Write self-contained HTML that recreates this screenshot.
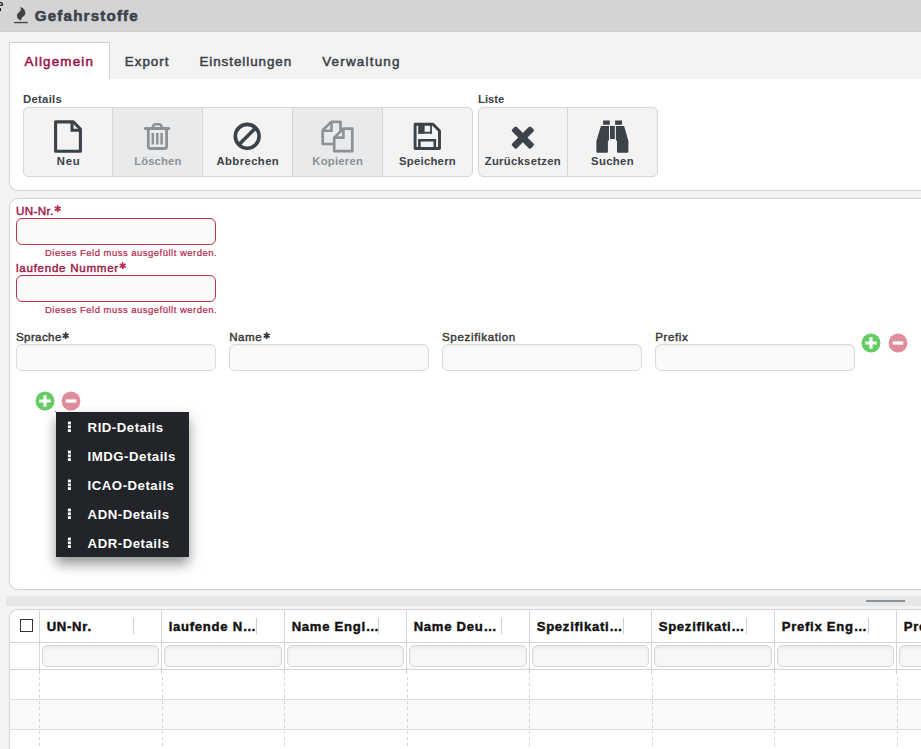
<!DOCTYPE html>
<html><head><meta charset="utf-8"><style>
html,body{margin:0;padding:0}
body{width:921px;height:749px;overflow:hidden;position:relative;background:#f3f3f3;font-family:"Liberation Sans", sans-serif}
.t{position:absolute;white-space:pre;line-height:1;font-family:"Liberation Sans", sans-serif}
svg{overflow:visible}
</style></head><body>
<div style="position:absolute;left:0px;top:0px;width:921px;height:32px;box-sizing:border-box;background:#d4d4d4;border-bottom:1px solid #cecece"></div>
<svg style="position:absolute;left:0;top:0" width="6" height="14" viewBox="0 0 6 14"><path d="M-3 2.6 H0.9 Q1.7 2.6 2.1 3.4 L2.5 4.2 V5.1 H-3 Z" fill="#fff" stroke="#14141c" stroke-width="1.15"/><rect x="-1" y="8.2" width="2" height="2.9" fill="#14141c"/></svg>
<svg style="position:absolute;left:13px;top:5px" width="16" height="20" viewBox="0 0 16 20"><path d="M7.4 2 C9.5 2.6 12.4 4.6 12.4 8.1 C12.4 10.6 9.6 11.7 8.7 13 C8.2 13.8 8.3 14.8 8.4 15.5 C6 15.2 3.9 13.2 3.9 10.8 C3.9 8.6 5.8 7.5 7.3 6 C8 5.2 7.8 3.4 7.4 2 Z" fill="#3b4249"/><rect x="1.2" y="16.9" width="13.5" height="1.3" fill="#3b4249"/></svg>
<div class="t" style="left:34.80px;top:7.73px;font-size:15.2px;font-weight:700;color:#3b4249;letter-spacing:1.15px;-webkit-text-stroke:0.55px #3b4249">Gefahrstoffe</div>
<div style="position:absolute;left:109px;top:79px;width:812px;height:1px;box-sizing:border-box;background:#d2d2d2"></div>
<div style="position:absolute;left:9px;top:42px;width:101px;height:39px;box-sizing:border-box;background:#fff;border:1px solid #d2d2d2;border-bottom:none"></div>
<div style="position:absolute;left:9px;top:79px;width:1px;height:1px;box-sizing:border-box;background:#fff"></div>
<div class="t" style="left:24.60px;top:54.86px;font-size:13.4px;font-weight:400;color:#9a1048;letter-spacing:1.2px;-webkit-text-stroke:0.5px #9a1048">Allgemein</div>
<div class="t" style="left:124.80px;top:54.86px;font-size:13.4px;font-weight:400;color:#3b4249;letter-spacing:1.0px;-webkit-text-stroke:0.5px #3b4249">Export</div>
<div class="t" style="left:199.40px;top:54.86px;font-size:13.4px;font-weight:400;color:#3b4249;letter-spacing:0.95px;-webkit-text-stroke:0.5px #3b4249">Einstellungen</div>
<div class="t" style="left:322.20px;top:54.86px;font-size:13.4px;font-weight:400;color:#3b4249;letter-spacing:1.22px;-webkit-text-stroke:0.5px #3b4249">Verwaltung</div>
<div style="position:absolute;left:9px;top:79px;width:930px;height:112px;box-sizing:border-box;background:#fff;border:1px solid #d2d2d2;border-top:none;border-radius:0 0 0 9px"></div>
<div class="t" style="left:23.00px;top:94.03px;font-size:11.3px;font-weight:700;color:#3b4249;letter-spacing:0.3px;">Details</div>
<div class="t" style="left:478.00px;top:94.03px;font-size:11.3px;font-weight:700;color:#3b4249;letter-spacing:0px;">Liste</div>
<div style="position:absolute;left:23px;top:107px;width:450px;height:70px;box-sizing:border-box;background:#f3f3f3;border:1px solid #d6d6d6;border-radius:5px"></div>
<div style="position:absolute;left:113px;top:108px;width:89px;height:68px;box-sizing:border-box;background:#e9eaec"></div>
<div style="position:absolute;left:293px;top:108px;width:89px;height:68px;box-sizing:border-box;background:#e9eaec"></div>
<div style="position:absolute;left:112px;top:108px;width:1px;height:68px;box-sizing:border-box;background:#d6d6d6"></div>
<div style="position:absolute;left:202px;top:108px;width:1px;height:68px;box-sizing:border-box;background:#d6d6d6"></div>
<div style="position:absolute;left:292px;top:108px;width:1px;height:68px;box-sizing:border-box;background:#d6d6d6"></div>
<div style="position:absolute;left:382px;top:108px;width:1px;height:68px;box-sizing:border-box;background:#d6d6d6"></div>
<div style="position:absolute;left:478px;top:107px;width:180px;height:70px;box-sizing:border-box;background:#f3f3f3;border:1px solid #d6d6d6;border-radius:5px"></div>
<div style="position:absolute;left:567px;top:108px;width:1px;height:68px;box-sizing:border-box;background:#d6d6d6"></div>
<div class="t" style="left:56.70px;top:156.43px;font-size:11.3px;font-weight:700;color:#3b4249;letter-spacing:0.85px;">Neu</div>
<div class="t" style="left:134.20px;top:156.43px;font-size:11.3px;font-weight:700;color:#8b9298;letter-spacing:0.117px;">Löschen</div>
<div class="t" style="left:216.50px;top:156.43px;font-size:11.3px;font-weight:700;color:#3b4249;letter-spacing:0.405px;">Abbrechen</div>
<div class="t" style="left:312.30px;top:156.43px;font-size:11.3px;font-weight:700;color:#8b9298;letter-spacing:0.223px;">Kopieren</div>
<div class="t" style="left:399.10px;top:156.43px;font-size:11.3px;font-weight:700;color:#3b4249;letter-spacing:0.245px;">Speichern</div>
<div class="t" style="left:484.70px;top:156.43px;font-size:11.3px;font-weight:700;color:#3b4249;letter-spacing:0.291px;">Zurücksetzen</div>
<div class="t" style="left:591.10px;top:156.43px;font-size:11.3px;font-weight:700;color:#3b4249;letter-spacing:0.35px;">Suchen</div>
<svg style="position:absolute;left:54px;top:120px" width="28" height="33" viewBox="0 0 28 33"><path d="M1.6 1.9 H19.3 L26.4 9 V31.2 H1.6 Z" fill="none" stroke="#3b4249" stroke-width="3.1" stroke-linejoin="round"/><path d="M18 1.9 V10.2 H26.4" fill="none" stroke="#3b4249" stroke-width="3"/></svg>
<svg style="position:absolute;left:143px;top:121px" width="28" height="30" viewBox="0 0 28 30"><path d="M2.4 7.5 H25.6" stroke="#8b9298" stroke-width="3" stroke-linecap="round"/><path d="M9.5 7 L10.6 4.3 Q11 3.3 12 3.3 H16.6 Q17.6 3.3 18 4.3 L19.4 7" fill="none" stroke="#8b9298" stroke-width="2.6"/><path d="M5.3 8 V25.5 Q5.3 27.5 7.3 27.5 H21.6 Q23.6 27.5 23.6 25.5 V8" fill="none" stroke="#8b9298" stroke-width="2.8"/><path d="M9.8 12 V23.6 M14.3 12 V23.6 M18.6 12 V23.6" stroke="#8b9298" stroke-width="2.5"/></svg>
<svg style="position:absolute;left:232px;top:121px" width="30" height="30" viewBox="0 0 30 30"><circle cx="15.2" cy="15.3" r="11.9" fill="none" stroke="#3b4249" stroke-width="3.6"/><path d="M6.8 23.7 L23.6 6.9" stroke="#3b4249" stroke-width="3.6"/></svg>
<svg style="position:absolute;left:320px;top:119px" width="36" height="36" viewBox="0 0 36 36"><path d="M14.2 25 H2.7 V11.2 L11.2 2.9 H20.5 V11.8" fill="none" stroke="#8b9298" stroke-width="2.7" stroke-linejoin="round"/><path d="M11.5 3 V11.7 H2.7" fill="none" stroke="#8b9298" stroke-width="2.6"/><path d="M14.2 32.1 V18.6 L23.2 9.7 H32.3 V32.1 Z" fill="none" stroke="#8b9298" stroke-width="2.7" stroke-linejoin="round"/><path d="M23.4 9.8 V18.6 H14.2" fill="none" stroke="#8b9298" stroke-width="2.6"/></svg>
<svg style="position:absolute;left:412px;top:121px" width="31" height="31" viewBox="0 0 31 31"><path d="M3.1 3.3 H21 L27.5 9.8 V27.5 H3.1 Z" fill="none" stroke="#3b4249" stroke-width="2.9" stroke-linejoin="round"/><rect x="6.2" y="3" width="6.4" height="9.6" fill="#3b4249"/><rect x="18.1" y="3" width="1.8" height="9.6" fill="#3b4249"/><rect x="6.2" y="10.8" width="13.7" height="1.8" fill="#3b4249"/><path d="M7.4 27.5 V19.3 H22.8 V27.5" fill="none" stroke="#3b4249" stroke-width="2.6"/></svg>
<svg style="position:absolute;left:510px;top:125px" width="26" height="26" viewBox="0 0 26 26"><g transform="rotate(45 12.85 12.55)" fill="#3b4249"><rect x="-0.45" y="9.25" width="26.6" height="6.6" rx="1.6"/><rect x="9.55" y="-0.75" width="6.6" height="26.6" rx="1.6"/></g></svg>
<svg style="position:absolute;left:595px;top:119px" width="35" height="35" viewBox="0 0 35 35"><rect x="8.1" y="1.5" width="6.7" height="4.3" fill="#3b4249"/><rect x="20.1" y="1.5" width="6.9" height="4.3" fill="#3b4249"/><path d="M5.9 6.9 H14 V21.6 H12.9 V32.8 Q12.9 33.8 11.9 33.8 H2.4 Q1.4 33.8 1.4 32.8 V22.1 Z" fill="#3b4249"/><rect x="15" y="6.9" width="4.8" height="13.1" fill="#3b4249"/><path d="M29.1 6.9 H20.9 V21.6 H22 V32.8 Q22 33.8 23 33.8 H32.4 Q33.4 33.8 33.4 32.8 V22.1 Z" fill="#3b4249"/></svg>
<div style="position:absolute;left:9px;top:198px;width:930px;height:392px;box-sizing:border-box;background:#fff;border:1px solid #d2d2d2;border-radius:9px 0 0 9px"></div>
<div class="t" style="left:16.00px;top:204.58px;font-size:11.6px;font-weight:400;color:#9c1b4b;letter-spacing:0.38px;-webkit-text-stroke:0.45px #9c1b4b">UN-Nr.</div>
<svg style="position:absolute;left:53.6px;top:205.1px" width="7" height="8" viewBox="0 0 7 8"><path d="M3.7 0.85 V6.35 M1.3 2.3 L6.1 5.05 M1.3 5.05 L6.1 2.3" stroke="#c22d4f" stroke-width="1.7" stroke-linecap="round"/></svg>
<div style="position:absolute;left:16px;top:218px;width:200px;height:27px;box-sizing:border-box;background:#fafafa;border:1px solid #c43150;border-radius:6px;box-shadow:inset 0 1px 2px rgba(0,0,0,0.035)"></div>
<div class="t" style="left:45.00px;top:248.16px;font-size:9.5px;font-weight:400;color:#b51d47;letter-spacing:0.48px;-webkit-text-stroke:0.2px #b51d47">Dieses Feld muss ausgefüllt werden.</div>
<div class="t" style="left:16.00px;top:261.58px;font-size:11.6px;font-weight:400;color:#9c1b4b;letter-spacing:0.72px;-webkit-text-stroke:0.45px #9c1b4b">laufende Nummer</div>
<svg style="position:absolute;left:118.9px;top:262.09999999999997px" width="7" height="8" viewBox="0 0 7 8"><path d="M3.7 0.85 V6.35 M1.3 2.3 L6.1 5.05 M1.3 5.05 L6.1 2.3" stroke="#c22d4f" stroke-width="1.7" stroke-linecap="round"/></svg>
<div style="position:absolute;left:16px;top:275px;width:200px;height:27px;box-sizing:border-box;background:#fafafa;border:1px solid #c43150;border-radius:6px;box-shadow:inset 0 1px 2px rgba(0,0,0,0.035)"></div>
<div class="t" style="left:45.00px;top:305.16px;font-size:9.5px;font-weight:400;color:#b51d47;letter-spacing:0.48px;-webkit-text-stroke:0.2px #b51d47">Dieses Feld muss ausgefüllt werden.</div>
<div class="t" style="left:16.00px;top:331.28px;font-size:11.6px;font-weight:400;color:#3a3a3a;letter-spacing:0.36px;-webkit-text-stroke:0.45px #3a3a3a">Sprache</div>
<svg style="position:absolute;left:61.6px;top:331.8px" width="7" height="8" viewBox="0 0 7 8"><path d="M3.7 0.85 V6.35 M1.3 2.3 L6.1 5.05 M1.3 5.05 L6.1 2.3" stroke="#3a3a3a" stroke-width="1.7" stroke-linecap="round"/></svg>
<div class="t" style="left:229.30px;top:331.28px;font-size:11.6px;font-weight:400;color:#3a3a3a;letter-spacing:0.45px;-webkit-text-stroke:0.45px #3a3a3a">Name</div>
<svg style="position:absolute;left:262.6px;top:331.8px" width="7" height="8" viewBox="0 0 7 8"><path d="M3.7 0.85 V6.35 M1.3 2.3 L6.1 5.05 M1.3 5.05 L6.1 2.3" stroke="#3a3a3a" stroke-width="1.7" stroke-linecap="round"/></svg>
<div class="t" style="left:442.00px;top:331.28px;font-size:11.6px;font-weight:400;color:#3a3a3a;letter-spacing:0.63px;-webkit-text-stroke:0.45px #3a3a3a">Spezifikation</div>
<div class="t" style="left:655.30px;top:331.28px;font-size:11.6px;font-weight:400;color:#3a3a3a;letter-spacing:0.57px;-webkit-text-stroke:0.45px #3a3a3a">Prefix</div>
<div style="position:absolute;left:16px;top:344px;width:200px;height:27px;box-sizing:border-box;background:#fafafa;border:1px solid #d9d9d9;border-radius:6px;box-shadow:inset 0 1px 2px rgba(0,0,0,0.035)"></div>
<div style="position:absolute;left:229px;top:344px;width:200px;height:27px;box-sizing:border-box;background:#fafafa;border:1px solid #d9d9d9;border-radius:6px;box-shadow:inset 0 1px 2px rgba(0,0,0,0.035)"></div>
<div style="position:absolute;left:442px;top:344px;width:200px;height:27px;box-sizing:border-box;background:#fafafa;border:1px solid #d9d9d9;border-radius:6px;box-shadow:inset 0 1px 2px rgba(0,0,0,0.035)"></div>
<div style="position:absolute;left:655px;top:344px;width:200px;height:27px;box-sizing:border-box;background:#fafafa;border:1px solid #d9d9d9;border-radius:6px;box-shadow:inset 0 1px 2px rgba(0,0,0,0.035)"></div>
<svg style="position:absolute;left:861.1px;top:333.0px" width="20" height="20" viewBox="0 0 20 20"><circle cx="10" cy="10" r="9.5" fill="#63cc63"/><path d="M4.3 10 H15.7 M10 4.3 V15.7" stroke="#fff" stroke-width="3.2"/></svg>
<svg style="position:absolute;left:887.6px;top:333.1px" width="20" height="20" viewBox="0 0 20 20"><circle cx="10" cy="10" r="9.4" fill="#e08d9b"/><path d="M4.7 10 H15.3" stroke="#fff" stroke-width="3.2"/></svg>
<svg style="position:absolute;left:35.2px;top:391.4px" width="20" height="20" viewBox="0 0 20 20"><circle cx="10" cy="10" r="9.5" fill="#63cc63"/><path d="M4.3 10 H15.7 M10 4.3 V15.7" stroke="#fff" stroke-width="3.2"/></svg>
<svg style="position:absolute;left:61.3px;top:391.2px" width="20" height="20" viewBox="0 0 20 20"><circle cx="10" cy="10" r="9.4" fill="#e08d9b"/><path d="M4.7 10 H15.3" stroke="#fff" stroke-width="3.2"/></svg>
<div style="position:absolute;left:55px;top:411px;width:1px;height:1px;box-sizing:border-box;background:#3b4249;border-radius:1px"></div>
<div style="position:absolute;left:56px;top:412px;width:133px;height:145px;box-sizing:border-box;background:#212428;box-shadow:0 7px 12px rgba(0,0,0,0.42)"></div>
<div class="t" style="left:87.60px;top:421.03px;font-size:13.2px;font-weight:700;color:#ffffff;letter-spacing:0.52px;">RID-Details</div>
<svg style="position:absolute;left:67px;top:421.2px" width="5" height="12" viewBox="0 0 5 12"><rect x="0.9" y="0.6" width="3" height="2.8" fill="#fff"/><rect x="0.9" y="4.4" width="3" height="2.8" fill="#fff"/><rect x="0.9" y="8.2" width="3" height="2.8" fill="#fff"/></svg>
<div class="t" style="left:87.60px;top:450.03px;font-size:13.2px;font-weight:700;color:#ffffff;letter-spacing:0.52px;">IMDG-Details</div>
<svg style="position:absolute;left:67px;top:450.2px" width="5" height="12" viewBox="0 0 5 12"><rect x="0.9" y="0.6" width="3" height="2.8" fill="#fff"/><rect x="0.9" y="4.4" width="3" height="2.8" fill="#fff"/><rect x="0.9" y="8.2" width="3" height="2.8" fill="#fff"/></svg>
<div class="t" style="left:87.60px;top:479.03px;font-size:13.2px;font-weight:700;color:#ffffff;letter-spacing:0.52px;">ICAO-Details</div>
<svg style="position:absolute;left:67px;top:479.2px" width="5" height="12" viewBox="0 0 5 12"><rect x="0.9" y="0.6" width="3" height="2.8" fill="#fff"/><rect x="0.9" y="4.4" width="3" height="2.8" fill="#fff"/><rect x="0.9" y="8.2" width="3" height="2.8" fill="#fff"/></svg>
<div class="t" style="left:87.60px;top:508.03px;font-size:13.2px;font-weight:700;color:#ffffff;letter-spacing:0.52px;">ADN-Details</div>
<svg style="position:absolute;left:67px;top:508.20000000000005px" width="5" height="12" viewBox="0 0 5 12"><rect x="0.9" y="0.6" width="3" height="2.8" fill="#fff"/><rect x="0.9" y="4.4" width="3" height="2.8" fill="#fff"/><rect x="0.9" y="8.2" width="3" height="2.8" fill="#fff"/></svg>
<div class="t" style="left:87.60px;top:537.03px;font-size:13.2px;font-weight:700;color:#ffffff;letter-spacing:0.52px;">ADR-Details</div>
<svg style="position:absolute;left:67px;top:537.2px" width="5" height="12" viewBox="0 0 5 12"><rect x="0.9" y="0.6" width="3" height="2.8" fill="#fff"/><rect x="0.9" y="4.4" width="3" height="2.8" fill="#fff"/><rect x="0.9" y="8.2" width="3" height="2.8" fill="#fff"/></svg>
<div style="position:absolute;left:6px;top:596px;width:915px;height:10px;box-sizing:border-box;background:#e6e7e8"></div>
<div style="position:absolute;left:866px;top:600px;width:39px;height:2px;box-sizing:border-box;background:#8a9297"></div>
<div style="position:absolute;left:9px;top:609px;width:930px;height:160px;box-sizing:border-box;background:#fff;border:1px solid #d5d5d5;border-radius:9px 0 0 0"></div>
<div style="position:absolute;left:10px;top:642px;width:911px;height:1px;box-sizing:border-box;background:#d5d5d5"></div>
<div style="position:absolute;left:10px;top:669px;width:911px;height:1px;box-sizing:border-box;background:#d5d5d5"></div>
<div style="position:absolute;left:10px;top:670px;width:911px;height:29px;box-sizing:border-box;background:#fff"></div>
<div style="position:absolute;left:10px;top:700px;width:911px;height:29px;box-sizing:border-box;background:#fafafa"></div>
<div style="position:absolute;left:10px;top:699px;width:911px;height:1px;box-sizing:border-box;background:#dcdcdc"></div>
<div style="position:absolute;left:10px;top:729px;width:911px;height:1px;box-sizing:border-box;background:#dcdcdc"></div>
<div style="position:absolute;left:39px;top:610px;width:1px;height:64px;box-sizing:border-box;background:#d5d5d5"></div>
<svg style="position:absolute;left:39px;top:670px" width="1" height="79" viewBox="0 0 1 79"><line x1="0.5" y1="7" x2="0.5" y2="79" stroke="#d3d3d3" stroke-width="1" stroke-dasharray="3 3"/></svg>
<div style="position:absolute;left:161px;top:610px;width:1px;height:64px;box-sizing:border-box;background:#d5d5d5"></div>
<svg style="position:absolute;left:162px;top:670px" width="1" height="79" viewBox="0 0 1 79"><line x1="0.5" y1="7" x2="0.5" y2="79" stroke="#d3d3d3" stroke-width="1" stroke-dasharray="3 3"/></svg>
<div style="position:absolute;left:284px;top:610px;width:1px;height:64px;box-sizing:border-box;background:#d5d5d5"></div>
<svg style="position:absolute;left:284px;top:670px" width="1" height="79" viewBox="0 0 1 79"><line x1="0.5" y1="7" x2="0.5" y2="79" stroke="#d3d3d3" stroke-width="1" stroke-dasharray="3 3"/></svg>
<div style="position:absolute;left:406px;top:610px;width:1px;height:64px;box-sizing:border-box;background:#d5d5d5"></div>
<svg style="position:absolute;left:407px;top:670px" width="1" height="79" viewBox="0 0 1 79"><line x1="0.5" y1="7" x2="0.5" y2="79" stroke="#d3d3d3" stroke-width="1" stroke-dasharray="3 3"/></svg>
<div style="position:absolute;left:529px;top:610px;width:1px;height:64px;box-sizing:border-box;background:#d5d5d5"></div>
<svg style="position:absolute;left:529px;top:670px" width="1" height="79" viewBox="0 0 1 79"><line x1="0.5" y1="7" x2="0.5" y2="79" stroke="#d3d3d3" stroke-width="1" stroke-dasharray="3 3"/></svg>
<div style="position:absolute;left:651px;top:610px;width:1px;height:64px;box-sizing:border-box;background:#d5d5d5"></div>
<svg style="position:absolute;left:652px;top:670px" width="1" height="79" viewBox="0 0 1 79"><line x1="0.5" y1="7" x2="0.5" y2="79" stroke="#d3d3d3" stroke-width="1" stroke-dasharray="3 3"/></svg>
<div style="position:absolute;left:774px;top:610px;width:1px;height:64px;box-sizing:border-box;background:#d5d5d5"></div>
<svg style="position:absolute;left:774px;top:670px" width="1" height="79" viewBox="0 0 1 79"><line x1="0.5" y1="7" x2="0.5" y2="79" stroke="#d3d3d3" stroke-width="1" stroke-dasharray="3 3"/></svg>
<div style="position:absolute;left:896px;top:610px;width:1px;height:64px;box-sizing:border-box;background:#d5d5d5"></div>
<svg style="position:absolute;left:897px;top:670px" width="1" height="79" viewBox="0 0 1 79"><line x1="0.5" y1="7" x2="0.5" y2="79" stroke="#d3d3d3" stroke-width="1" stroke-dasharray="3 3"/></svg>
<div style="position:absolute;left:20px;top:619px;width:13px;height:13px;box-sizing:border-box;border:1.3px solid #333;background:#fff"></div>
<div class="t" style="left:46.70px;top:619.91px;font-size:13.1px;font-weight:700;color:#111;letter-spacing:0.72px;-webkit-text-stroke:0.42px #111">UN-Nr.</div>
<div style="position:absolute;left:133px;top:618px;width:1px;height:16px;box-sizing:border-box;background:#cfcfcf"></div>
<div style="position:absolute;left:42px;top:645px;width:117px;height:22px;box-sizing:border-box;background:#f7f7f7;border:1px solid #d8d8d8;border-radius:5px;box-shadow:inset 0 2px 3px rgba(0,0,0,0.06)"></div>
<div class="t" style="left:168.70px;top:619.91px;font-size:13.1px;font-weight:700;color:#111;letter-spacing:0.72px;-webkit-text-stroke:0.42px #111">laufende N…</div>
<div style="position:absolute;left:256px;top:618px;width:1px;height:16px;box-sizing:border-box;background:#cfcfcf"></div>
<div style="position:absolute;left:164px;top:645px;width:118px;height:22px;box-sizing:border-box;background:#f7f7f7;border:1px solid #d8d8d8;border-radius:5px;box-shadow:inset 0 2px 3px rgba(0,0,0,0.06)"></div>
<div class="t" style="left:291.70px;top:619.91px;font-size:13.1px;font-weight:700;color:#111;letter-spacing:0.72px;-webkit-text-stroke:0.42px #111">Name Engl…</div>
<div style="position:absolute;left:378px;top:618px;width:1px;height:16px;box-sizing:border-box;background:#cfcfcf"></div>
<div style="position:absolute;left:287px;top:645px;width:117px;height:22px;box-sizing:border-box;background:#f7f7f7;border:1px solid #d8d8d8;border-radius:5px;box-shadow:inset 0 2px 3px rgba(0,0,0,0.06)"></div>
<div class="t" style="left:413.70px;top:619.91px;font-size:13.1px;font-weight:700;color:#111;letter-spacing:0.72px;-webkit-text-stroke:0.42px #111">Name Deu…</div>
<div style="position:absolute;left:501px;top:618px;width:1px;height:16px;box-sizing:border-box;background:#cfcfcf"></div>
<div style="position:absolute;left:409px;top:645px;width:118px;height:22px;box-sizing:border-box;background:#f7f7f7;border:1px solid #d8d8d8;border-radius:5px;box-shadow:inset 0 2px 3px rgba(0,0,0,0.06)"></div>
<div class="t" style="left:536.70px;top:619.91px;font-size:13.1px;font-weight:700;color:#111;letter-spacing:0.72px;-webkit-text-stroke:0.42px #111">Spezifikati…</div>
<div style="position:absolute;left:623px;top:618px;width:1px;height:16px;box-sizing:border-box;background:#cfcfcf"></div>
<div style="position:absolute;left:532px;top:645px;width:117px;height:22px;box-sizing:border-box;background:#f7f7f7;border:1px solid #d8d8d8;border-radius:5px;box-shadow:inset 0 2px 3px rgba(0,0,0,0.06)"></div>
<div class="t" style="left:658.70px;top:619.91px;font-size:13.1px;font-weight:700;color:#111;letter-spacing:0.72px;-webkit-text-stroke:0.42px #111">Spezifikati…</div>
<div style="position:absolute;left:746px;top:618px;width:1px;height:16px;box-sizing:border-box;background:#cfcfcf"></div>
<div style="position:absolute;left:654px;top:645px;width:118px;height:22px;box-sizing:border-box;background:#f7f7f7;border:1px solid #d8d8d8;border-radius:5px;box-shadow:inset 0 2px 3px rgba(0,0,0,0.06)"></div>
<div class="t" style="left:781.70px;top:619.91px;font-size:13.1px;font-weight:700;color:#111;letter-spacing:0.72px;-webkit-text-stroke:0.42px #111">Prefix Eng…</div>
<div style="position:absolute;left:868px;top:618px;width:1px;height:16px;box-sizing:border-box;background:#cfcfcf"></div>
<div style="position:absolute;left:777px;top:645px;width:117px;height:22px;box-sizing:border-box;background:#f7f7f7;border:1px solid #d8d8d8;border-radius:5px;box-shadow:inset 0 2px 3px rgba(0,0,0,0.06)"></div>
<div class="t" style="left:903.70px;top:619.91px;font-size:13.1px;font-weight:700;color:#111;letter-spacing:0.72px;-webkit-text-stroke:0.42px #111">Pre</div>
<div style="position:absolute;left:991px;top:618px;width:1px;height:16px;box-sizing:border-box;background:#cfcfcf"></div>
<div style="position:absolute;left:899px;top:645px;width:118px;height:22px;box-sizing:border-box;background:#f7f7f7;border:1px solid #d8d8d8;border-radius:5px;box-shadow:inset 0 2px 3px rgba(0,0,0,0.06)"></div>
</body></html>
